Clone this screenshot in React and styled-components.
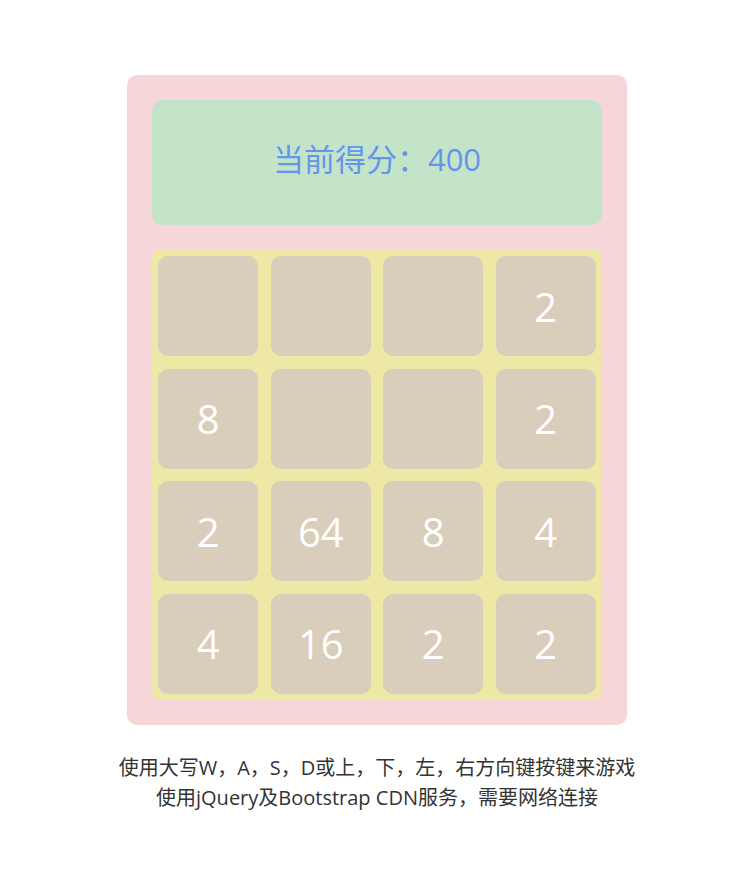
import React from 'react'
import styled, { createGlobalStyle } from 'styled-components'

const GlobalStyle = createGlobalStyle`
  body {
    margin: 0;
    background: #ffffff;
    font-family: "Open Sans", "Noto Sans CJK SC", sans-serif;
  }
`

const Page = styled.div`
  display: flex;
  flex-direction: column;
  align-items: center;
  padding: 75px 0 0 6px;
`

const Board = styled.div`
  width: 450px;
  padding: 25px;
  background: #f6d6d9;
  border-radius: 10px;
`

const ScoreBox = styled.div`
  height: 125px;
  box-sizing: border-box;
  padding-bottom: 10px;
  margin-bottom: 25px;
  display: flex;
  align-items: center;
  justify-content: center;
  background: #c4e4ca;
  border-radius: 10px;
  color: #6495ed;
  font-size: 31px;
`

const Grid = styled.div`
  display: grid;
  grid-template-columns: repeat(4, 100px);
  grid-auto-rows: 100px;
  gap: 12.5px;
  padding: 6.25px;
  background: #eee8a6;
  border-radius: 8px;
`

const Cell = styled.div`
  display: flex;
  align-items: center;
  justify-content: center;
  background: #d9cdbb;
  border-radius: 10px;
  color: #ffffff;
  font-size: 40px;
`

const Notes = styled.div`
  margin-top: 28px;
  text-align: center;
  color: #333333;
  font-size: 20px;
  line-height: 30px;
`

const cells = [
  '', '', '', 2,
  8, '', '', 2,
  2, 64, 8, 4,
  4, 16, 2, 2
]

export default function App() {
  return (
    <Page>
      <GlobalStyle />
      <Board>
        <ScoreBox>当前得分：400</ScoreBox>
        <Grid>
          {cells.map((v, i) => (
            <Cell key={i}>{v}</Cell>
          ))}
        </Grid>
      </Board>
      <Notes>
        <div>使用大写W，A，S，D或上，下，左，右方向键按键来游戏</div>
        <div>使用jQuery及Bootstrap CDN服务，需要网络连接</div>
      </Notes>
    </Page>
  )
}
